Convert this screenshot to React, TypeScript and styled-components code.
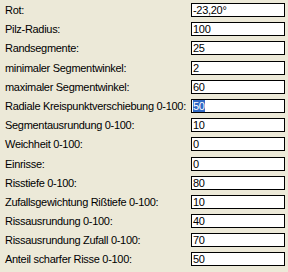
import React from "react"
import styled, { createGlobalStyle } from "styled-components"

interface IParam {
  label: string
  value: string
  selected?: boolean
}

const params: IParam[] = [
  { label: "Rot:", value: "-23,20°" },
  { label: "Pilz-Radius:", value: "100" },
  { label: "Randsegmente:", value: "25" },
  { label: "minimaler Segmentwinkel:", value: "2" },
  { label: "maximaler Segmentwinkel:", value: "60" },
  { label: "Radiale Kreispunktverschiebung 0-100:", value: "50", selected: true },
  { label: "Segmentausrundung 0-100:", value: "10" },
  { label: "Weichheit 0-100:", value: "0" },
  { label: "Einrisse:", value: "0" },
  { label: "Risstiefe 0-100:", value: "80" },
  { label: "Zufallsgewichtung Rißtiefe 0-100:", value: "10" },
  { label: "Rissausrundung 0-100:", value: "40" },
  { label: "Rissausrundung Zufall 0-100:", value: "70" },
  { label: "Anteil scharfer Risse 0-100:", value: "50" }
]

const GlobalStyle = createGlobalStyle`
  html, body {
    margin: 0;
    padding: 0;
    background: #ece9d8;
  }
`

const Panel = styled.div`
  width: 288px;
  height: 272px;
  box-sizing: border-box;
  background: #ece9d8;
  padding: 3px 3px 0 5px;
  display: grid;
  grid-template-columns: 186px 94px;
  grid-auto-rows: 14px;
  row-gap: 5.2px;
  font-family: "Liberation Sans", Arial, sans-serif;
  font-size: 11px;
  letter-spacing: -0.3px;
  color: #000;
`

const Label = styled.div`
  display: flex;
  align-items: center;
  white-space: nowrap;
  line-height: 14px;
`

const Field = styled.div`
  box-sizing: border-box;
  height: 14px;
  background: #fff;
  border: 1px solid #000;
  padding: 0 0 0 1px;
  line-height: 12px;
  white-space: nowrap;
  overflow: hidden;
`

const Selection = styled.span`
  background: #316ac5;
  color: #fff;
`

const ParamDialog: React.FC = () => (
  <Panel>
    {params.map((p) => (
      <React.Fragment key={p.label}>
        <Label>{p.label}</Label>
        <Field>{p.selected ? <Selection>{p.value}</Selection> : p.value}</Field>
      </React.Fragment>
    ))}
  </Panel>
)

const App: React.FC = () => (
  <>
    <GlobalStyle />
    <ParamDialog />
  </>
)

export default App
